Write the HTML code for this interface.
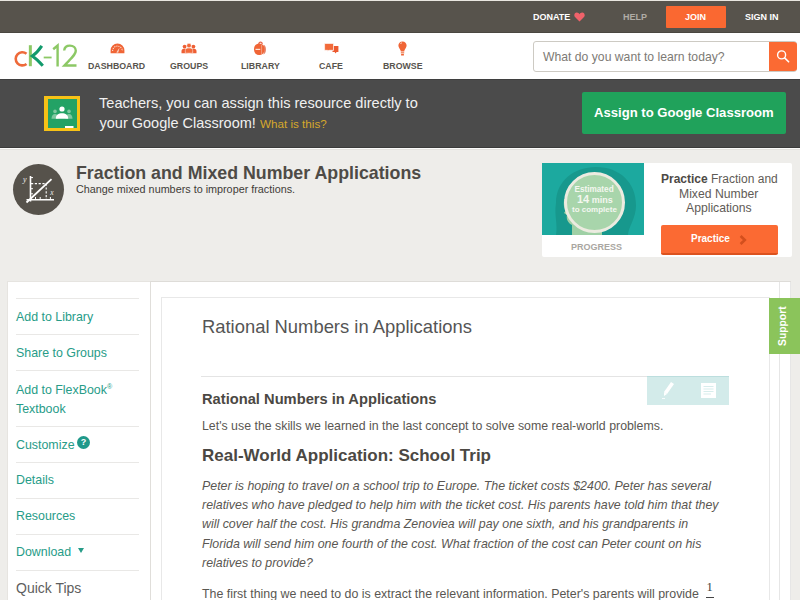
<!DOCTYPE html>
<html><head><meta charset="utf-8">
<style>
*{margin:0;padding:0;box-sizing:border-box}
html,body{width:800px;height:600px;overflow:hidden;background:#eeedea;font-family:"Liberation Sans",sans-serif;position:relative}
.a{position:absolute}
.t{position:absolute;white-space:nowrap;line-height:1}
#topbar{left:0;top:1px;width:800px;height:32px;background:#57534c;border-bottom:1px solid #4a4741}
#nav{left:0;top:33px;width:800px;height:46px;background:#fff}
#banner{left:0;top:79px;width:800px;height:69px;background:#4b4b4b;border-bottom:1px solid #3b3b3b;border-top:1px solid #3f3f3f}
#bline{left:0;top:148px;width:800px;height:2px;background:#fbfbfa;border-bottom:1px solid #e4e2df}
.tb{font-weight:bold;font-size:9px;color:#fff}
.nl{font-weight:bold;font-size:8.8px;color:#58544e}
.link{font-size:12.4px;color:#279c88}
.sep{position:absolute;left:16px;width:123px;height:1px;background:#e9e8e6}
.it{font-style:italic;font-size:12.4px;color:#5a5752}
</style></head><body>
<div class="a" style="left:0;top:0;width:800px;height:1px;background:#e9e6e0"></div>
<div class="a" id="topbar"></div>
<div class="t tb" id="t_donate" style="top:12.5px;left:533px">DONATE</div>
<svg class="a" style="left:574px;top:12px" width="11" height="10" viewBox="0 0 11 10"><path d="M5.5 9.5 L1 5 C-0.5 3.3 0.5 0.5 2.8 0.5 C4 0.5 5 1.3 5.5 2.2 C6 1.3 7 0.5 8.2 0.5 C10.5 0.5 11.5 3.3 10 5 Z" fill="#f0626a"/></svg>
<div class="t tb" id="t_help" style="top:12.5px;left:623px;color:#b0aca5">HELP</div>
<div class="a" style="left:665.5px;top:5.5px;width:60.5px;height:22px;background:#fa6831;border-radius:1px"></div>
<div class="t tb" id="t_join" style="top:12.5px;left:685px">JOIN</div>
<div class="t tb" id="t_signin" style="top:12.5px;left:745px">SIGN IN</div>

<div class="a" id="nav"></div>
<!-- logo -->
<svg class="a" style="left:10px;top:40px" width="70" height="32" viewBox="0 0 70 32">
  <path d="M16.5 13.7 A6.6 6.6 0 1 0 16.5 23.9" fill="none" stroke="#ee6a3a" stroke-width="2.6"/>
  <path d="M20.35 5.2 V26.2" stroke="#8cc865" stroke-width="3"/>
  <path d="M31.8 5.8 C29 10 26 13.5 22.3 16 C26 18.5 29.5 22 32.8 25.8" fill="none" stroke="#129a6c" stroke-width="3"/>
  <path d="M33.7 17.5 H41.6" stroke="#8cc865" stroke-width="1.8"/>
  <path d="M43.2 9.2 L47.6 5.6 V26.5" fill="none" stroke="#8cc865" stroke-width="2.4"/>
  <path d="M54.2 10.5 C54.5 7 57 5.6 59.9 5.6 C63.5 5.6 65.8 7.8 65.8 10.8 C65.8 14.5 62 17.5 54.4 25.5 H66.5" fill="none" stroke="#8cc865" stroke-width="2.4"/>
</svg>
<!-- nav icons -->
<svg class="a" style="left:110px;top:43px" width="15" height="11" viewBox="0 0 15 11"><path d="M0.6 10.3 V7.3 A6.9 6.9 0 0 1 14.4 7.3 V10.3Z" fill="#f06536"/><path d="M2.6 8 A4.9 4.9 0 0 1 12.4 8" fill="none" stroke="#fde0d2" stroke-width="1.1" stroke-dasharray="1.1 1"/><path d="M6.3 9.6 L9.6 4.6 L8.2 9.8Z" fill="#fbd6c6"/></svg>
<svg class="a" style="left:181px;top:43px" width="16" height="11" viewBox="0 0 16 11"><circle cx="3.6" cy="3.6" r="1.9" fill="#ee5f34"/><circle cx="12.4" cy="3.6" r="1.9" fill="#ee5f34"/><path d="M0.5 10.2 V8 C0.5 6.3 1.8 5.7 3.6 5.7 C5.4 5.7 6.5 6.3 6.5 8 V10.2Z M9.5 10.2 V8 C9.5 6.3 10.6 5.7 12.4 5.7 C14.2 5.7 15.5 6.3 15.5 8 V10.2Z" fill="#ee5f34"/><circle cx="8" cy="2.6" r="2.3" fill="#f26a3a" stroke="#fff" stroke-width="0.5"/><path d="M4.3 10.2 V7.6 C4.3 5.6 6 5 8 5 C10 5 11.7 5.6 11.7 7.6 V10.2Z" fill="#f26a3a" stroke="#fff" stroke-width="0.5"/></svg>
<svg class="a" style="left:253px;top:40px" width="15" height="16" viewBox="0 0 15 16"><path d="M5.8 4.2 C5.8 1.4 9.2 1.4 9.2 4.2" fill="none" stroke="#e9664a" stroke-width="1.3"/><path d="M10.5 4.8 C13.8 5.5 13.8 13.5 10.5 14.5Z" fill="#e8866c"/><rect x="1" y="3.6" width="10.5" height="11.4" rx="5" ry="5.2" fill="#f06536"/><path d="M2.5 9.4 H7.2" stroke="#fde3d6" stroke-width="1.2"/><path d="M8.6 5 V15" stroke="#f7b59c" stroke-width="0.7"/></svg>
<svg class="a" style="left:324px;top:43px" width="16" height="12" viewBox="0 0 16 12"><path d="M9.5 3 H14.4 V9 H12.6 L11.5 10.6 L10.6 9 H8.5 V7.6 H9.5Z" fill="#ec5a30"/><path d="M0.6 0.5 H9.5 V7.3 H4.8 L3.3 8.6 L3.8 7.3 H0.6Z" fill="#f26a3a" stroke="#fff" stroke-width="0.6"/></svg>
<svg class="a" style="left:398px;top:40.5px" width="10" height="15" viewBox="0 0 10 15"><path d="M4.5 0.5 C7 0.5 8.6 2.3 8.6 4.6 C8.6 6.6 7.2 7.6 6.3 9.8 V10.5 H2.7 V9.8 C1.8 7.6 0.4 6.6 0.4 4.6 C0.4 2.3 2 0.5 4.5 0.5Z" fill="#f06536"/><path d="M2.6 3 C2.8 2.2 3.2 1.8 3.8 1.7" fill="none" stroke="#fde3d6" stroke-width="0.9"/><rect x="2.8" y="11.1" width="3.4" height="1.4" fill="#f08a62"/><rect x="3.1" y="13" width="2.8" height="1.5" fill="#f06536"/></svg>
<div class="t nl" id="n_dash" style="left:88px;top:62px">DASHBOARD</div>
<div class="t nl" id="n_groups" style="left:170px;top:62px">GROUPS</div>
<div class="t nl" id="n_lib" style="left:241px;top:62px">LIBRARY</div>
<div class="t nl" id="n_cafe" style="left:319px;top:62px">CAFE</div>
<div class="t nl" id="n_browse" style="left:383px;top:62px">BROWSE</div>
<!-- search -->
<div class="a" style="left:533px;top:41px;width:264px;height:31px;border:1.5px solid #cdcac3;border-radius:3px;background:#fff"></div>
<div class="a" style="left:769px;top:41.5px;width:28px;height:29px;background:#fb6a33;border-radius:0 3px 3px 0"></div>
<svg class="a" style="left:775px;top:48px" width="16" height="16" viewBox="0 0 16 16"><circle cx="6.6" cy="6.9" r="4" fill="none" stroke="#fff" stroke-width="1.4"/><path d="M9.6 9.9 L13.6 13.8" stroke="#fff" stroke-width="1.6" stroke-linecap="round"/></svg>
<div class="t" id="s_ph" style="left:543px;top:50.5px;font-size:12.2px;color:#7d7a75">What do you want to learn today?</div>

<div class="a" id="banner"></div><div class="a" id="bline"></div>
<div class="a" style="left:44px;top:96px;width:36px;height:35px;background:#f7c216"></div>
<div class="a" style="left:47.5px;top:99.3px;width:29px;height:28.6px;background:#23a265"></div>
<svg class="a" style="left:48px;top:100px" width="28" height="28" viewBox="0 0 28 28"><circle cx="7" cy="11.4" r="1.8" fill="#7fc8a0"/><circle cx="21" cy="11.4" r="1.8" fill="#7fc8a0"/><path d="M3.5 18.8 C3.5 15.5 5 14 7 14 C9 14 10.5 15.5 10.5 18.8Z M17.5 18.8 C17.5 15.5 19 14 21 14 C23 14 24.5 15.5 24.5 18.8Z" fill="#7fc8a0"/><circle cx="14" cy="9" r="2.6" fill="#fff"/><path d="M7.8 18.8 C7.8 14.8 10.5 13.3 14 13.3 C17.5 13.3 20.2 14.8 20.2 18.8Z" fill="#fff"/><rect x="17" y="26" width="8.5" height="2" fill="#fff"/></svg>
<div class="t" id="b_l1" style="left:99px;top:96px;font-size:14.6px;color:#f0f0f0">Teachers, you can assign this resource directly to</div>
<div class="t" id="b_l2" style="left:99.5px;top:115.5px;font-size:14.5px;color:#f0f0f0">your Google Classroom! <span style="font-size:11.7px;color:#d6a82c">What is this?</span></div>
<div class="a" style="left:582px;top:92px;width:204px;height:42px;background:#20a25b;border-radius:2px"></div>
<div class="t" id="b_btn" style="left:594px;top:106px;font-size:13.1px;font-weight:bold;color:#fff">Assign to Google Classroom</div>

<!-- title -->
<div class="a" style="left:13px;top:164px;width:51px;height:51px;border-radius:50%;background:#56524b"></div>
<svg class="a" style="left:13px;top:164px" width="51" height="51" viewBox="0 0 51 51"><path d="M17.5 12 V37.5 M13.5 35.7 H41" fill="none" stroke="#fff" stroke-width="1.6"/><path d="M13.5 38.5 L38.5 15.2" stroke="#fff" stroke-width="1.8"/><path d="M18 19.6 H33.2 V35" fill="none" stroke="#fff" stroke-width="1.1" stroke-dasharray="2.2 1.6"/><path d="M17.5 13.6 H20 M17.5 24.7 H20 M17.5 29.8 H20 M22.5 33 V35.7 M27.2 33 V35.7 M37.4 33 V35.7" stroke="#fff" stroke-width="1"/><text x="10" y="18" font-size="8" font-style="italic" fill="#eee" font-family="Liberation Serif">y</text><text x="37.2" y="31" font-size="7.5" font-style="italic" fill="#eee" font-family="Liberation Serif">x</text></svg>
<div class="t" id="ti" style="left:76px;top:164.5px;font-size:17.8px;font-weight:bold;color:#4e4b46">Fraction and Mixed Number Applications</div>
<div class="t" id="sub" style="left:76px;top:183.5px;font-size:10.8px;color:#3f3c38">Change mixed numbers to improper fractions.</div>

<!-- practice card -->
<div class="a" style="left:542px;top:163px;width:250px;height:94px;background:#fff;border-radius:2px"></div>
<div class="a" style="left:542px;top:163px;width:102px;height:72px;background:#1ca99f;overflow:hidden">
  <svg width="102" height="72" viewBox="0 0 102 72"><path d="M14 72 C16 62 12 52 14 40 C14 18 32 4 54 4 C78 4 94 20 94 42 C94 56 86 64 86 72Z" fill="#17988d"/><path d="M30 72 V62 C26 60 24 56 25 52 L22 50 L24 47 C21 44 22 40 22 36 H60 V72Z" fill="#9fd0a5"/></svg>
</div>
<div class="a" style="left:564px;top:172px;width:61px;height:61px;border-radius:50%;background:#a8d5ab;border:3.2px solid #ecebe0"></div>
<div class="t" id="c1" style="left:574.5px;top:186px;font-size:8.2px;font-weight:bold;color:#f4f7f0">Estimated</div>
<div class="t" id="c2" style="left:577px;top:194px;font-size:9px;font-weight:bold;color:#f4f7f0"><span style="font-size:11px">14</span> mins</div>
<div class="t" id="c3" style="left:572px;top:206px;font-size:8px;font-weight:bold;color:#f4f7f0">to complete</div>
<div class="t" id="prog" style="left:571px;top:243px;font-size:9px;font-weight:bold;color:#a9a6a1">PROGRESS</div>
<div class="t" id="p1" style="left:661px;top:173px;font-size:12px;color:#5f5b56"><b style="color:#4d4a45">Practice</b> Fraction and</div>
<div class="t" id="p2" style="left:679px;top:187.5px;font-size:12.2px;color:#5f5b56">Mixed Number</div>
<div class="t" id="p3" style="left:686px;top:201.5px;font-size:12.2px;color:#5f5b56">Applications</div>
<div class="a" style="left:661px;top:225px;width:117px;height:30px;background:#fb6a33;border-bottom:2px solid #dc531f;border-radius:2px"></div>
<div class="t" id="pbtn" style="left:691px;top:234px;font-size:10px;font-weight:bold;color:#fff">Practice</div>
<svg class="a" style="left:739px;top:234.5px" width="8" height="10" viewBox="0 0 8 10"><path d="M1.6 1 L5.8 5 L1.6 9" fill="none" stroke="#d34f1d" stroke-width="2.6"/></svg>

<!-- sidebar -->
<div class="a" style="left:7px;top:281px;width:144px;height:319px;background:#fff;border-right:1.5px solid #e0deda;border-left:1px solid #e6e4e0;border-top:1px solid #e6e4e0"></div>
<div class="sep" style="top:298px"></div>
<div class="sep" style="top:334px"></div>
<div class="sep" style="top:370px"></div>
<div class="sep" style="top:426px"></div>
<div class="sep" style="top:462px"></div>
<div class="sep" style="top:498px"></div>
<div class="sep" style="top:534px"></div>
<div class="sep" style="top:570px"></div>
<div class="t link" id="l1" style="left:16px;top:310.5px">Add to Library</div>
<div class="t link" id="l2" style="left:16px;top:346.5px">Share to Groups</div>
<div class="t link" id="l3" style="left:16px;top:382.5px">Add to FlexBook<sup style="font-size:7px;vertical-align:5px">®</sup></div>
<div class="t link" id="l3b" style="left:16px;top:403px">Textbook</div>
<div class="t link" id="l4" style="left:16px;top:438.5px">Customize</div>
<div class="a" style="left:77px;top:436px;width:13px;height:13px;border-radius:50%;background:#20998a;color:#fff;font-size:9px;font-weight:bold;text-align:center;line-height:13px">?</div>
<div class="t link" id="l5" style="left:16px;top:473.5px">Details</div>
<div class="t link" id="l6" style="left:16px;top:509.5px">Resources</div>
<div class="t link" id="l7" style="left:16px;top:545.5px">Download</div>
<svg class="a" style="left:78px;top:548px" width="6" height="5" viewBox="0 0 6 5"><path d="M0 0 H6 L3 5Z" fill="#279c88"/></svg>
<div class="t" id="l8" style="left:16px;top:581px;font-size:14px;color:#5e5e5e">Quick Tips</div>

<!-- main -->
<div class="a" style="left:150px;top:281px;width:641px;height:319px;background:#fff;border-top:1.5px solid #dedcd8;border-left:1.5px solid #e0deda"></div>
<div class="a" style="left:161px;top:297px;width:609px;height:303px;border:1px solid #e8e8e8;border-bottom:none"></div>
<div class="a" style="left:779px;top:282px;width:1px;height:318px;background:#e6e6e6"></div>
<div class="a" style="left:790px;top:282px;width:1px;height:318px;background:#e6e6e6"></div>
<div class="t" id="h1" style="left:202px;top:318px;font-size:18.4px;color:#555">Rational Numbers in Applications</div>
<div class="a" style="left:201px;top:375.5px;width:446px;height:1px;background:#e4e4e4"></div>
<div class="a" style="left:647px;top:376px;width:82px;height:29px;background:#d3ebea;border-top:1px solid #bcdede"></div>
<svg class="a" style="left:661px;top:381px" width="14" height="18" viewBox="0 0 14 18"><path d="M10 1 L13 3 L6 13 L3 11Z" fill="#fff"/><path d="M3 11 L6 13 L3 15Z" fill="#fff"/><path d="M1 17.5 H4" stroke="#fff" stroke-width="0.8"/></svg>
<svg class="a" style="left:701px;top:383px" width="15" height="15" viewBox="0 0 15 15"><rect x="0" y="0" width="15" height="15" fill="#fff"/><path d="M2.5 3.5 H12.5 M2.5 6 H12.5 M2.5 8.5 H12.5 M2.5 11 H10" stroke="#d3ebea" stroke-width="0.9"/></svg>
<div class="t" id="h2" style="left:202px;top:392px;font-size:14.7px;font-weight:bold;color:#4b4843">Rational Numbers in Applications</div>
<div class="t" id="p_lets" style="left:202px;top:420px;font-size:12.35px;color:#5a5752">Let's use the skills we learned in the last concept to solve some real-world problems.</div>
<div class="t" id="h3" style="left:202px;top:447px;font-size:17px;font-weight:bold;color:#4b4843">Real-World Application: School Trip</div>
<div class="t it" id="i1" style="left:202px;top:480px">Peter is hoping to travel on a school trip to Europe. The ticket costs $2400. Peter has several</div>
<div class="t it" id="i2" style="left:202px;top:499px">relatives who have pledged to help him with the ticket cost. His parents have told him that they</div>
<div class="t it" id="i3" style="left:202px;top:518px">will cover half the cost. His grandma Zenoviea will pay one sixth, and his grandparents in</div>
<div class="t it" id="i4" style="left:202px;top:538px">Florida will send him one fourth of the cost. What fraction of the cost can Peter count on his</div>
<div class="t it" id="i5" style="left:202px;top:557px">relatives to provide?</div>
<div class="t" id="p_first" style="left:202px;top:588px;font-size:12.4px;color:#5a5752">The first thing we need to do is extract the relevant information. Peter's parents will provide</div>
<div class="t" id="frac" style="left:706.5px;top:580.5px;font-size:12.5px;color:#3a3a3a;font-family:'Liberation Serif',serif">1</div>
<div class="a" style="left:705.5px;top:596.5px;width:8.5px;height:1.2px;background:#444"></div>

<!-- support -->
<div class="a" style="left:768.5px;top:298.3px;width:31.5px;height:55.5px;background:#8bc45b"></div>
<div class="t" id="sup" style="left:763px;top:321px;font-size:10.3px;font-weight:bold;color:#fff;transform:rotate(-90deg);transform-origin:center">Support</div>
</body></html>
